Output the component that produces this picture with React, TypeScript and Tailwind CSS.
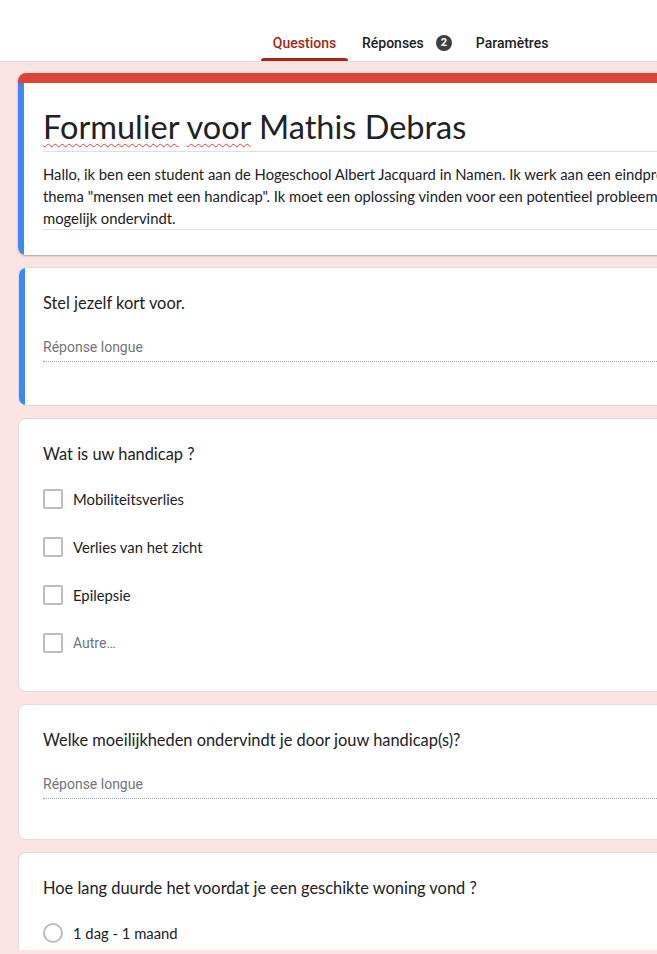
import React from "react";

const body = { fontFamily: "Lato, 'Open Sans', sans-serif" };
const roboto = { fontFamily: "Roboto, Arial, sans-serif" };

const Card = ({
	active,
	children,
	className = "",
}: {
	active?: boolean;
	children: React.ReactNode;
	className?: string;
}) => (
	<div
		className={`relative w-[770px] bg-white rounded-lg border border-[#dadce0] overflow-hidden ${className}`}
	>
		{active && <div className="absolute left-0 top-0 bottom-0 w-[6px] bg-[#4285f4]" />}
		<div className="pl-[24px] pr-6">{children}</div>
	</div>
);

const LongAnswer = () => (
	<div
		style={roboto}
		className="mt-[22px] text-[14px] leading-[20px] text-[#70757a] pb-[4px] border-b border-dotted border-[#9aa0a6]"
	>
		Réponse longue
	</div>
);

const Checkbox = ({ label, muted }: { label: string; muted?: boolean }) => (
	<div className="flex items-center h-[48px]">
		<div className="w-[20px] h-[20px] rounded-[2px] border-2 border-[#bdbdbd] shrink-0" />
		<span
			className={`ml-[10px] ${muted ? "text-[14px] text-[#70757a]" : "text-[14.8px] text-[#202124]"}`}
			style={muted ? roboto : undefined}
		>
			{label}
		</span>
	</div>
);

export default function App() {
	return (
		<div className="w-[657px] h-[954px] overflow-hidden bg-[#fbe4e2]" style={body}>
			<header className="h-[62px] bg-white border-b border-[#dadce0] flex items-end pl-[261px]" style={roboto}>
				<div className="flex items-end text-[14px] font-medium">
					<div className="relative w-[87px] h-[62px] flex items-center justify-center pt-[26px] text-[#a52714]">
						Questions
						<div className="absolute left-0 right-0 bottom-0 h-[3px] rounded-t-[3px] bg-[#a52714]" />
					</div>
					<div className="h-[62px] flex items-center pt-[26px] ml-[14px] text-[#202124]">
						Réponses
						<span className="ml-[12px] w-[16px] h-[16px] rounded-full bg-[#3c4043] text-white text-[11px] font-bold flex items-center justify-center">
							2
						</span>
					</div>
					<div className="h-[62px] flex items-center pt-[26px] ml-[24px] text-[#202124]">
						Paramètres
					</div>
				</div>
			</header>

			<div className="pl-[18px] pt-[11px] flex flex-col gap-[12px]">
				<div className="relative w-[770px] bg-white rounded-lg overflow-hidden shadow-[0_1px_2px_rgba(0,0,0,0.3)]">
					<div className="h-[10px] bg-[#db4437]" />
					<div className="absolute left-0 top-[10px] bottom-0 w-[6px] bg-[#4285f4] rounded-bl-lg" />
					<div className="pl-[25px] pr-6 pb-[25px]">
						<div className="mt-[19px] text-[32.5px] leading-[49px] text-[#202124] border-b border-[#e0e0e0]">
							<span className="underline decoration-wavy decoration-[#e53935] decoration-1 underline-offset-[4px]">
								Formulier
							</span>{" "}
							<span className="underline decoration-wavy decoration-[#e53935] decoration-1 underline-offset-[4px]">
								voor
							</span>{" "}
							Mathis Debras
						</div>
						<p className="mt-[11px] text-[14.8px] leading-[22px] text-[#202124] whitespace-nowrap border-b border-[#e0e0e0]">
							Hallo, ik ben een student aan de Hogeschool Albert Jacquard in Namen. Ik werk aan een eindproject rond het
							<br />
							thema "mensen met een handicap". Ik moet een oplossing vinden voor een potentieel probleem dat u
							<br />
							mogelijk ondervindt.
						</p>
					</div>
				</div>

				<Card active className="h-[139px]">
					<div className="pt-[23px] text-[16.4px] leading-[24px] text-[#202124]">Stel jezelf kort voor.</div>
					<LongAnswer />
				</Card>

				<Card className="h-[274px]">
					<div className="pt-[23px] text-[16.4px] leading-[24px] text-[#202124]">Wat is uw handicap ?</div>
					<div className="mt-[9px]">
						<Checkbox label="Mobiliteitsverlies" />
						<Checkbox label="Verlies van het zicht" />
						<Checkbox label="Epilepsie" />
						<Checkbox label="Autre…" muted />
					</div>
				</Card>

				<Card className="h-[136px]">
					<div className="pt-[23px] text-[16.4px] leading-[24px] text-[#202124]">
						Welke moeilijkheden ondervindt je door jouw handicap(s)?
					</div>
					<LongAnswer />
				</Card>

				<div className="relative w-[770px] h-[98px] bg-white rounded-t-lg border border-b-0 border-[#dadce0] pl-[24px]">
					<div className="pt-[23px] text-[16.4px] leading-[24px] text-[#202124]">
						Hoe lang duurde het voordat je een geschikte woning vond ?
					</div>
					<div className="flex items-center mt-[22px]">
						<div className="w-[20px] h-[20px] rounded-full border-2 border-[#bdbdbd]" />
						<span className="ml-[10px] text-[14.8px] text-[#202124]">1 dag - 1 maand</span>
					</div>
				</div>
			</div>
		</div>
	);
}
